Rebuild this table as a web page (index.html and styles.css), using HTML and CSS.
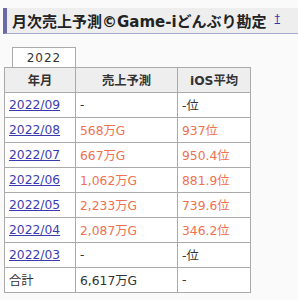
FILE: index.html
```html
<!DOCTYPE html>
<html lang="ja">
<head>
<meta charset="utf-8">
<link rel="stylesheet" href="styles.css">
</head>
<body>
<h2 class="title"><span class="title-text">月次売上予測©Game-iどんぶり勘定</span><a class="dagger" href="#">†</a></h2>
<div class="tabs"><div class="tab">2022</div></div>
<table class="sales">
  <colgroup><col class="c1"><col class="c2"><col class="c3"></colgroup>
  <thead>
    <tr><th>年月</th><th>売上予測</th><th>iOS平均</th></tr>
  </thead>
  <tbody>
    <tr><td><a href="#">2022/09</a></td><td>-</td><td>-位</td></tr>
    <tr><td><a href="#">2022/08</a></td><td class="hot">568万G</td><td class="hot">937位</td></tr>
    <tr><td><a href="#">2022/07</a></td><td class="hot">667万G</td><td class="hot">950.4位</td></tr>
    <tr><td><a href="#">2022/06</a></td><td class="hot">1,062万G</td><td class="hot">881.9位</td></tr>
    <tr><td><a href="#">2022/05</a></td><td class="hot">2,233万G</td><td class="hot">739.6位</td></tr>
    <tr><td><a href="#">2022/04</a></td><td class="hot">2,087万G</td><td class="hot">346.2位</td></tr>
    <tr><td><a href="#">2022/03</a></td><td>-</td><td>-位</td></tr>
    <tr><td>合計</td><td>6,617万G</td><td>-</td></tr>
  </tbody>
</table>
</body>
</html>
```
FILE: styles.css
```css
html, body {
  margin: 0;
  padding: 0;
  background: #fafafa;
  font-family: "DejaVu Sans", "Noto Sans CJK JP", sans-serif;
  color: #333;
}
.title {
  margin: 8px 0 0 3px;
  height: 25px;
  background: #eeeeee;
  border-left: 4px solid #6a6aa6;
  border-bottom: 1px solid #a8a8d0;
  display: flex;
  align-items: center;
  padding-left: 5px;
  font-size: 15px;
  font-weight: bold;
  color: #222;
}
.dagger {
  font-size: 11px;
  font-weight: normal;
  color: #3333aa;
  margin-left: 8px;
  align-self: flex-start;
  margin-top: 4px;
}
.tabs {
  margin: 13px 0 0 12px;
  display: flex;
}
.tab {
  width: 62px;
  height: 19px;
  background: #fff;
  border: 1px solid #aaa;
  border-bottom: none;
  font-size: 12px;
  letter-spacing: 1px;
  display: flex;
  align-items: center;
  justify-content: center;
  color: #333;
}
.sales {
  margin-left: 4px;
  border-collapse: collapse;
  table-layout: fixed;
  width: 246px;
  font-size: 12.3px;
}
.c1 { width: 71px; }
.c2 { width: 102px; }
.c3 { width: 73px; }
.sales th, .sales td {
  border: 1px solid #aaa;
  height: 24px;
  padding: 0 4px;
  text-align: left;
  background: #fff;
  white-space: nowrap;
}
.sales th {
  background: #eeeeee;
  text-align: center;
  font-weight: bold;
}
.sales a {
  color: #3b3bb0;
  text-decoration: underline;
}
.hot {
  color: #f07050;
}
```
